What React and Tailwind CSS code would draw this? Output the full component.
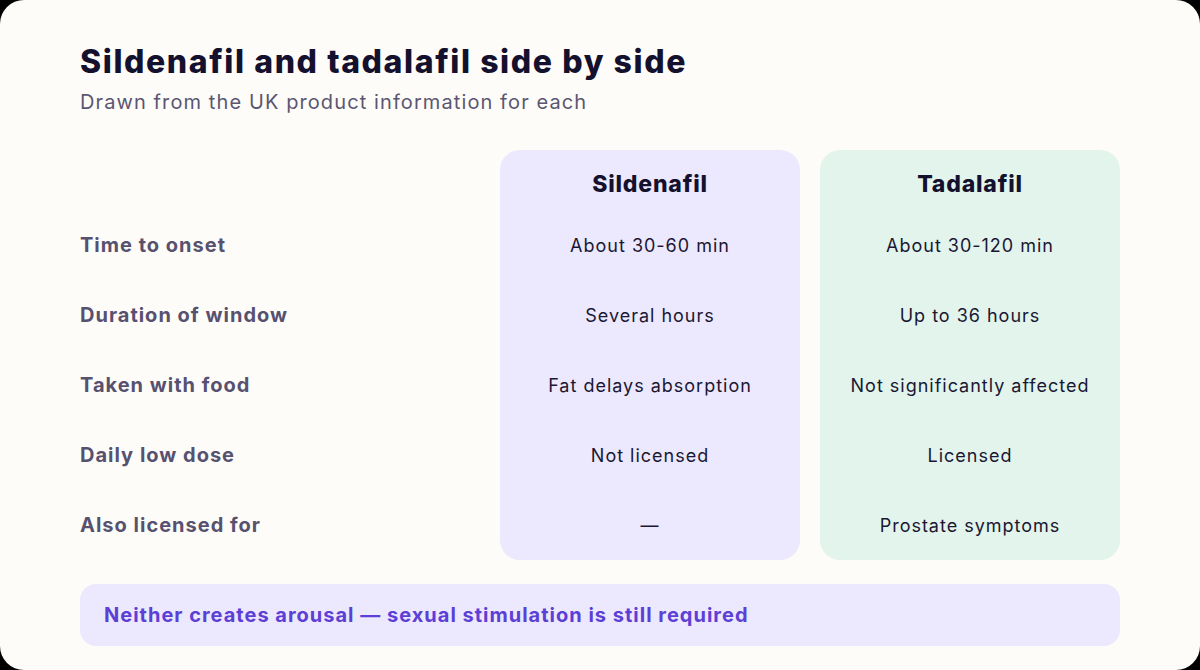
import React from 'react';

const rows = [
  { label: 'Time to onset', a: 'About 30-60 min', b: 'About 30-120 min' },
  { label: 'Duration of window', a: 'Several hours', b: 'Up to 36 hours' },
  { label: 'Taken with food', a: 'Fat delays absorption', b: 'Not significantly affected' },
  { label: 'Daily low dose', a: 'Not licensed', b: 'Licensed' },
  { label: 'Also licensed for', a: '—', b: 'Prostate symptoms' },
];

const DrugColumn = ({ name, field, tone }) => (
  <div className={`w-[300px] rounded-[20px] ${tone}`}>
    <div className="h-[60px] pt-[14px] flex justify-center">
      <span className="h-10 flex items-center text-[23px] font-extrabold tracking-[0.035em] text-[#14112e]">{name}</span>
    </div>
    {rows.map((r) => (
      <div key={r.label} className="h-[70px] flex items-center justify-center text-[18px] tracking-[0.055em] text-[#1a1733]">
        {r[field]}
      </div>
    ))}
  </div>
);

const App = () => {
  return (
    <div className="bg-black w-[1200px] h-[670px]" style={{ fontFamily: 'Inter, "Noto Sans", sans-serif' }}>
      <div className="h-[670px] bg-[#fefcf8] rounded-[24px] px-20 pt-[42px]">
        <h1 className="text-[32px] leading-10 font-extrabold text-[#14112e] tracking-[0.05em]">
          Sildenafil and tadalafil side by side
        </h1>
        <p className="mt-[6px] text-[20px] leading-7 text-[#5a5672] tracking-[0.055em]">
          Drawn from the UK product information for each
        </p>

        <div className="mt-[34px] flex gap-5">
          <div className="flex-1">
            <div className="h-[60px]" />
            {rows.map((r) => (
              <div key={r.label} className="h-[70px] flex items-center text-[20px] font-bold tracking-[0.05em] text-[#575170]">
                {r.label}
              </div>
            ))}
          </div>
          <DrugColumn name="Sildenafil" field="a" tone="bg-[#ece8fd]" />
          <DrugColumn name="Tadalafil" field="b" tone="bg-[#e2f4eb]" />
        </div>

        <div className="mt-6 h-[62px] rounded-2xl bg-[#ece8fd] px-6 flex items-center">
          <span className="text-[20px] font-bold tracking-[0.05em] text-[#5b3fd6]">
            Neither creates arousal — sexual stimulation is still required
          </span>
        </div>
      </div>
    </div>
  );
};

export default App;
